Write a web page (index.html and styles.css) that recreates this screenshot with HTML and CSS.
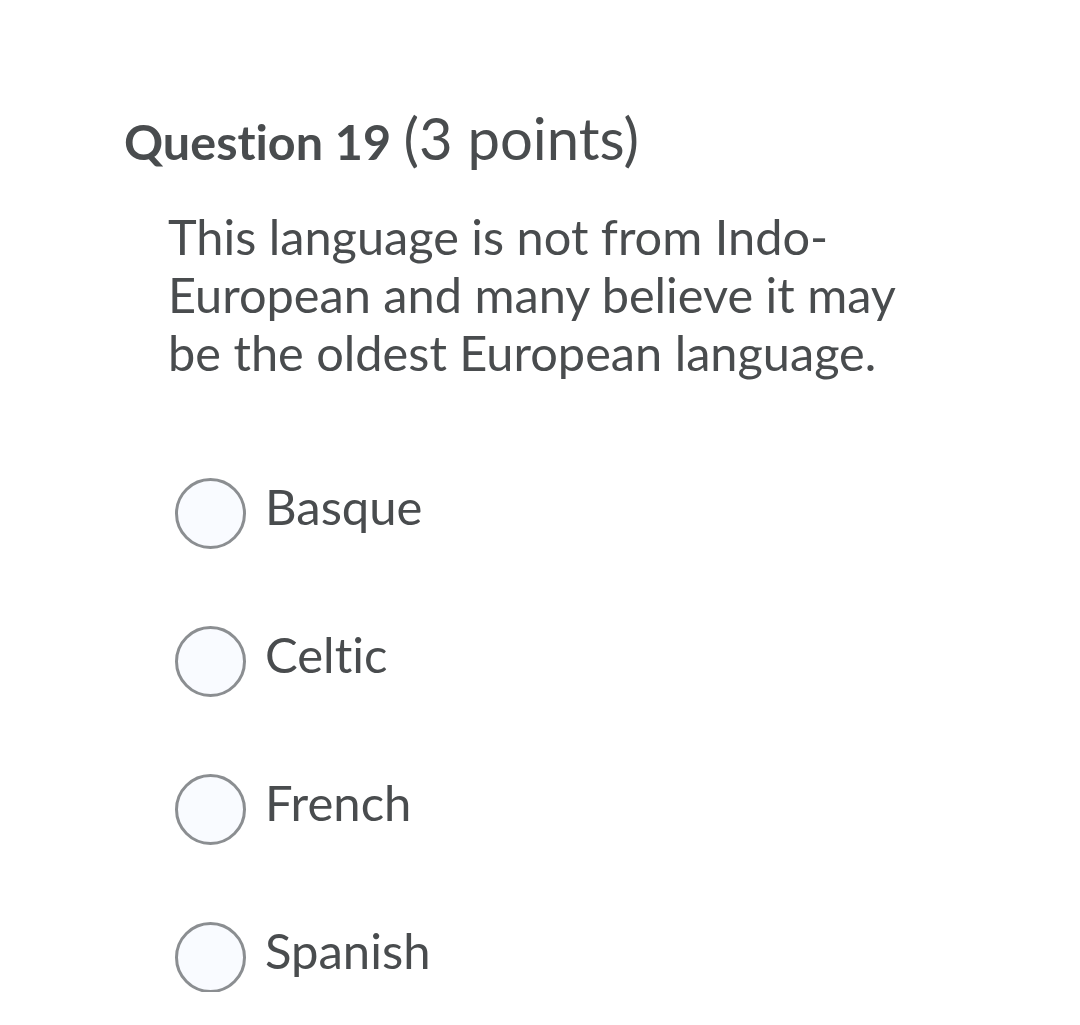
FILE: index.html
```html
<!DOCTYPE html>
<html lang="en">
<head>
<meta charset="utf-8">
<title>Question 19</title>
<link rel="stylesheet" href="styles.css">
</head>
<body>
<main class="quiz">
  <h2 class="q-title"><strong>Question 19</strong> <span class="pts">(3 points)</span></h2>
  <p class="q-text">This language is not from Indo-<br>European and many believe it may<br>be the oldest European language.</p>
  <ul class="options">
    <li class="opt"><span class="radio"></span><span class="label">Basque</span></li>
    <li class="opt"><span class="radio"></span><span class="label">Celtic</span></li>
    <li class="opt"><span class="radio"></span><span class="label">French</span></li>
    <li class="opt"><span class="radio"></span><span class="label">Spanish</span></li>
  </ul>
</main>
</body>
</html>
```
FILE: styles.css
```css
html, body {
  margin: 0;
  padding: 0;
  background: #ffffff;
}
body {
  font-family: Lato, "Open Sans", sans-serif;
  color: #494c4e;
  font-variant-ligatures: none;
  font-feature-settings: "liga" 0, "clig" 0;
}
.quiz {
  padding: 108px 0 0 124px;
}
.q-title {
  margin: 0;
  font-size: 48.5px;
  line-height: 60px;
  font-weight: 400;
}
.q-title strong {
  font-weight: 700;
}
.q-title .pts {
  font-size: 58px;
}
.q-text {
  margin: 36px 0 0 44px;
  font-size: 48.7px;
  line-height: 58px;
}
.options {
  list-style: none;
  margin: 97px 0 0 51px;
  padding: 0;
  display: flex;
  flex-direction: column;
  gap: 78px;
}
.opt {
  display: flex;
  align-items: center;
  gap: 19px;
  height: 70px;
}
.radio {
  box-sizing: border-box;
  width: 71px;
  height: 71px;
  border: 3px solid #8b8e91;
  border-radius: 50%;
  background: #f9fbff;
  flex: none;
}
.label {
  font-size: 49px;
  line-height: 58px;
  margin-top: -14px;
}
```
